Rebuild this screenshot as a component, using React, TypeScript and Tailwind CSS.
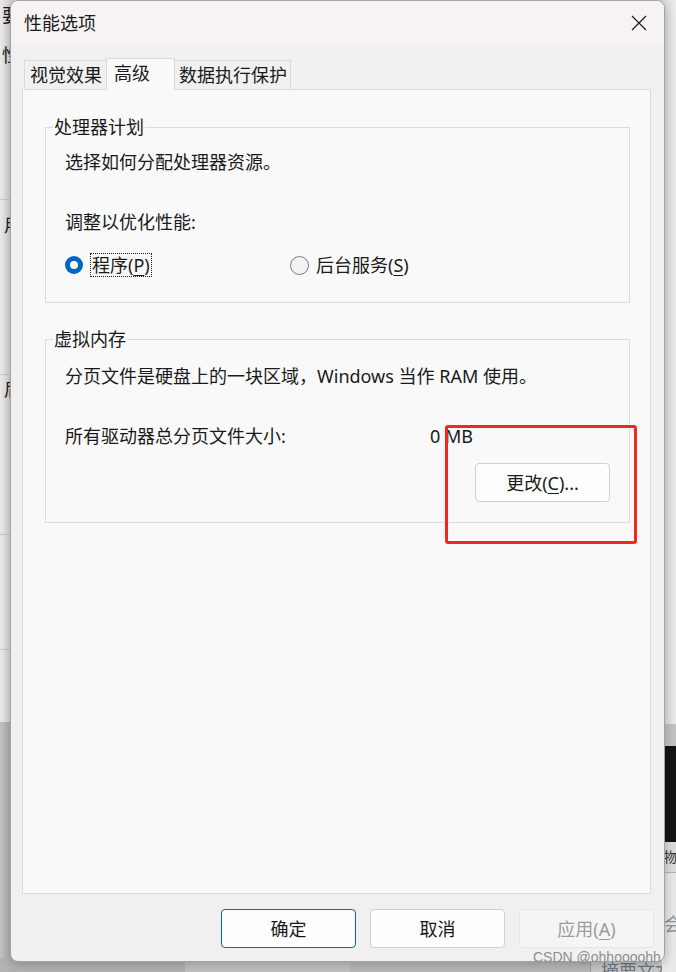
import type { ReactNode } from "react";

const ui = "font-['Noto_Sans','Noto_Sans_CJK_SC',sans-serif]";

function Key({ children }: { children: ReactNode }) {
  return <span className="underline decoration-1 underline-offset-[3px]">{children}</span>;
}

function Radio({ checked }: { checked?: boolean }) {
  if (checked) {
    return (
      <span className="flex h-[18px] w-[18px] shrink-0 items-center justify-center rounded-full bg-[#0067c0]">
        <span className="h-[8px] w-[8px] rounded-full bg-white" />
      </span>
    );
  }
  return <span className="h-[19px] w-[19px] shrink-0 rounded-full border border-[#7d7d7d] bg-[#f3f3f3]" />;
}

function Group({ title, className, children }: { title: string; className?: string; children: ReactNode }) {
  return (
    <fieldset className={`ml-[22px] mr-[20px] border border-[#dcdcdc] ${className ?? ""}`}>
      <legend className="ml-[7px] h-[18px] px-px text-[18px] leading-[18px]">{title}</legend>
      <div className="px-[19px]">{children}</div>
    </fieldset>
  );
}

function Tab({ label, active, className }: { label: string; active?: boolean; className: string }) {
  return (
    <div
      className={`border border-b-0 border-[#d9d9d9] pt-[5px] text-[18px] leading-[18px] ${
        active ? "relative z-10 -mb-px h-[32px] bg-[#f9f9f9]" : "h-[29px] bg-[#f0f0f0]"
      } ${className}`}
    >
      {label}
    </div>
  );
}

function DialogButton({ children, primary, disabled }: { children: ReactNode; primary?: boolean; disabled?: boolean }) {
  const tone = primary
    ? "border-[#0067c0] bg-[#fdfdfd] text-[#1a1a1a]"
    : disabled
      ? "border-[#e6e6e6] bg-[#f5f5f5] text-[#9d9d9d]"
      : "border-[#d0d0d0] bg-[#fdfdfd] text-[#1a1a1a]";
  return (
    <button
      type="button"
      disabled={disabled}
      className={`flex h-[39px] w-[135px] items-center justify-center rounded-[4px] border text-[18px] leading-[18px] ${tone}`}
    >
      {children}
    </button>
  );
}

// window behind the dialog, only its edges show
function Backdrop() {
  return (
    <>
      <div className="absolute left-0 top-0 h-[722px] w-[14px] bg-gradient-to-r from-[#ececec] to-[#d2d2d2]">
        <div className="flex flex-col text-[18px] leading-[18px] text-[#1a1a1a]">
          <span className="ml-[2px] mt-[6px]">要</span>
          <span className="ml-[2px] mt-[22px]">性</span>
          <span className="mt-[135px] h-px bg-[#c9c9c9]" />
          <span className="ml-[4px] mt-[16px]">用</span>
          <span className="mt-[140px] h-px bg-[#c9c9c9]" />
          <span className="ml-[4px] mt-[5px]">后</span>
          <span className="mt-[136px] h-px bg-[#c9c9c9]" />
          <span className="mt-[114px] h-px bg-[#c9c9c9]" />
        </div>
      </div>
      <div className="absolute left-0 top-[722px] h-[250px] w-[14px] bg-gradient-to-r from-[#c4c4c4] to-[#a9a9a9]" />
      <div className="absolute left-0 top-[958px] flex h-[14px] w-[676px] overflow-hidden">
        <div className="w-[185px] bg-[#b3b3b3]" />
        <div className="w-[165px] bg-[#c2c2c2]" />
        <div className="w-[240px] bg-[#b9b9b9]" />
        <div className="flex-1 whitespace-nowrap border-l border-[#9a9a9a] bg-[#c9c9c9] pl-[10px] text-[18px] leading-[26px] text-[#6a7a8a]">
          摘要文本
        </div>
      </div>
      <div className="absolute right-0 top-0 flex h-[972px] w-[14px] flex-col overflow-hidden bg-[#e9e9e9]">
        <div className="h-[724px] bg-gradient-to-l from-[#ececec] to-[#dcdcdc]" />
        <div className="h-[22px] bg-[#c4c4c4]" />
        <div className="h-[96px] bg-[#141414]" />
        <div className="h-[30px] whitespace-nowrap bg-[#dedede] pl-[1px] text-[14px] leading-[30px] text-[#333]">
          物索
        </div>
        <div className="h-px bg-[#b5b5b5]" />
        <div className="whitespace-nowrap pl-[2px] pt-[42px] text-[18px] leading-[18px] text-[#8a96a3]">会</div>
      </div>
    </>
  );
}

export default function App() {
  return (
    <div className={`relative h-[972px] w-[676px] overflow-hidden bg-[#d8d8d8] text-[#1a1a1a] ${ui}`}>
      <Backdrop />

      <div className="absolute left-[10px] top-0 flex h-[962px] w-[655px] flex-col overflow-hidden rounded-[8px] border border-[#a3a3a3] bg-[#f0f0f0] shadow-[0_2px_12px_rgba(0,0,0,0.25)]">
        {/* title bar */}
        <div className="flex h-[44px] shrink-0 items-center justify-between bg-[#f7f3f2] pl-[13px] pr-[17px]">
          <span className="text-[18px] leading-[18px]">性能选项</span>
          <svg width="16" height="16" viewBox="0 0 16 16" className="text-[#1a1a1a]">
            <path d="M1 1L15 15M15 1L1 15" stroke="currentColor" strokeWidth="1.2" />
          </svg>
        </div>

        {/* tabs */}
        <div className="ml-[13px] mt-[13px] flex h-[31px] shrink-0 items-end">
          <Tab label="视觉效果" className="w-[83px] pl-[5px]" />
          <Tab label="高级" active className="-ml-px w-[69px] pl-[7px]" />
          <Tab label="数据执行保护" className="-ml-px w-[117px] pl-[4px]" />
        </div>

        {/* tab page */}
        <div className="ml-[11px] mr-[13px] flex h-[805px] shrink-0 flex-col border border-[#dadada] bg-[#f9f9f9] text-[18px] leading-[24px]">
          <Group title="处理器计划" className="mt-[28px] pb-[25px]">
            <p className="mt-[14px] h-[24px]">选择如何分配处理器资源。</p>
            <p className="mt-[36px] h-[24px]">调整以优化性能:</p>
            <div className="mt-[19px] flex h-[24px] items-center">
              <div className="flex w-[225px] items-center gap-[7px]">
                <Radio checked />
                <span className="flex h-[24px] items-center border border-dotted border-[#1a1a1a] px-px">
                  程序(<Key>P</Key>)
                </span>
              </div>
              <div className="flex items-center gap-[6px]">
                <Radio />
                <span className="px-px">
                  后台服务(<Key>S</Key>)
                </span>
              </div>
            </div>
          </Group>

          <Group title="虚拟内存" className="mt-[27px] pb-[20px]">
            <p className="mt-[16px] h-[24px]">分页文件是硬盘上的一块区域，Windows 当作 RAM 使用。</p>
            <div className="mt-[36px] flex h-[24px]">
              <span className="w-[365px]">所有驱动器总分页文件大小:</span>
              <span>0 MB</span>
            </div>
            <div className="mt-[15px] flex justify-end">
              <DialogButton>
                更改(<Key>C</Key>)...
              </DialogButton>
            </div>
          </Group>
        </div>

        {/* footer buttons */}
        <div className="mt-[15px] flex justify-end gap-[14px] pr-[10px]">
          <DialogButton primary>确定</DialogButton>
          <DialogButton>取消</DialogButton>
          <DialogButton disabled>
            应用(<Key>A</Key>)
          </DialogButton>
        </div>
      </div>

      {/* red highlight around the change button */}
      <div className="absolute left-[445px] top-[425px] h-[119px] w-[192px] rounded-[3px] border-[3px] border-[#f3281c]" />

      <span className="absolute left-[533px] top-[947px] font-['Liberation_Sans',sans-serif] text-[14px] leading-[20px] text-[#8e8e8e]">
        CSDN @ohhoooohh
      </span>
    </div>
  );
}
